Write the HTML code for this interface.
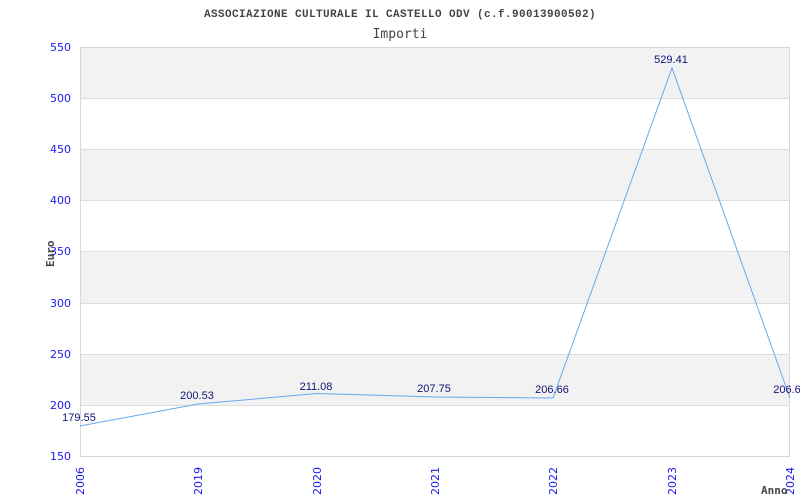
<!DOCTYPE html>
<html><head><meta charset="utf-8"><style>
html,body{margin:0;padding:0;background:#fff;width:800px;height:500px;overflow:hidden}
</style></head><body>
<svg width="800" height="500" xmlns="http://www.w3.org/2000/svg">
<rect x="0" y="0" width="800" height="500" fill="#fff"/>
<g fill="#f2f2f2">
<rect x="80" y="47" width="710" height="51"/>
<rect x="80" y="149" width="710" height="51"/>
<rect x="80" y="251" width="710" height="52"/>
<rect x="80" y="354" width="710" height="51"/>
</g>
<g stroke="#dddddd" stroke-width="1">
<line x1="80" y1="98.5" x2="790" y2="98.5"/>
<line x1="80" y1="149.5" x2="790" y2="149.5"/>
<line x1="80" y1="200.5" x2="790" y2="200.5"/>
<line x1="80" y1="251.5" x2="790" y2="251.5"/>
<line x1="80" y1="303.5" x2="790" y2="303.5"/>
<line x1="80" y1="354.5" x2="790" y2="354.5"/>
<line x1="80" y1="405.5" x2="790" y2="405.5"/>
</g>
<rect x="80.5" y="47.5" width="709" height="409" fill="none" stroke="#d8d8d8"/>
<polyline fill="none" stroke="#66aaee" stroke-width="1" points="80,426 198,404 317,393.5 435,397 553,398 672,68 790,398"/>
<text x="400" y="17" text-anchor="middle" font-family="'Liberation Mono',monospace" font-weight="bold" font-size="11" letter-spacing="0.4" fill="#444">ASSOCIAZIONE CULTURALE IL CASTELLO ODV (c.f.90013900502)</text>
<text x="400" y="38" text-anchor="middle" font-family="'DejaVu Sans Mono',monospace" font-size="13" fill="#444">Importi</text>
<g font-family="'DejaVu Sans',sans-serif" font-size="11" fill="#1a1aee" text-anchor="end">
<text x="71" y="51">550</text><text x="71" y="102">500</text><text x="71" y="153">450</text>
<text x="71" y="204">400</text><text x="71" y="255">350</text><text x="71" y="307">300</text>
<text x="71" y="358">250</text><text x="71" y="409">200</text><text x="71" y="460">150</text>
</g>
<g font-family="'DejaVu Sans',sans-serif" font-size="11" fill="#1a1aee">
<text transform="translate(84,495) rotate(-90)">2006</text>
<text transform="translate(202,495) rotate(-90)">2019</text>
<text transform="translate(321,495) rotate(-90)">2020</text>
<text transform="translate(439,495) rotate(-90)">2021</text>
<text transform="translate(557,495) rotate(-90)">2022</text>
<text transform="translate(676,495) rotate(-90)">2023</text>
<text transform="translate(794,495) rotate(-90)">2024</text>
</g>
<g font-family="'Liberation Sans',sans-serif" font-size="11" fill="#111177" text-anchor="middle">
<text x="79" y="421">179.55</text>
<text x="197" y="399">200.53</text>
<text x="316" y="390">211.08</text>
<text x="434" y="392">207.75</text>
<text x="552" y="393">206.66</text>
<text x="671" y="63">529.41</text>
<text x="787" y="393">206.6</text>
</g>
<text transform="translate(54,267) rotate(-90)" font-family="'DejaVu Sans Mono',monospace" font-weight="bold" font-size="11" fill="#444">Euro</text>
<text x="761" y="494" font-family="'DejaVu Sans Mono',monospace" font-weight="bold" font-size="11" fill="#444">Anno</text>
</svg>
</body></html>
